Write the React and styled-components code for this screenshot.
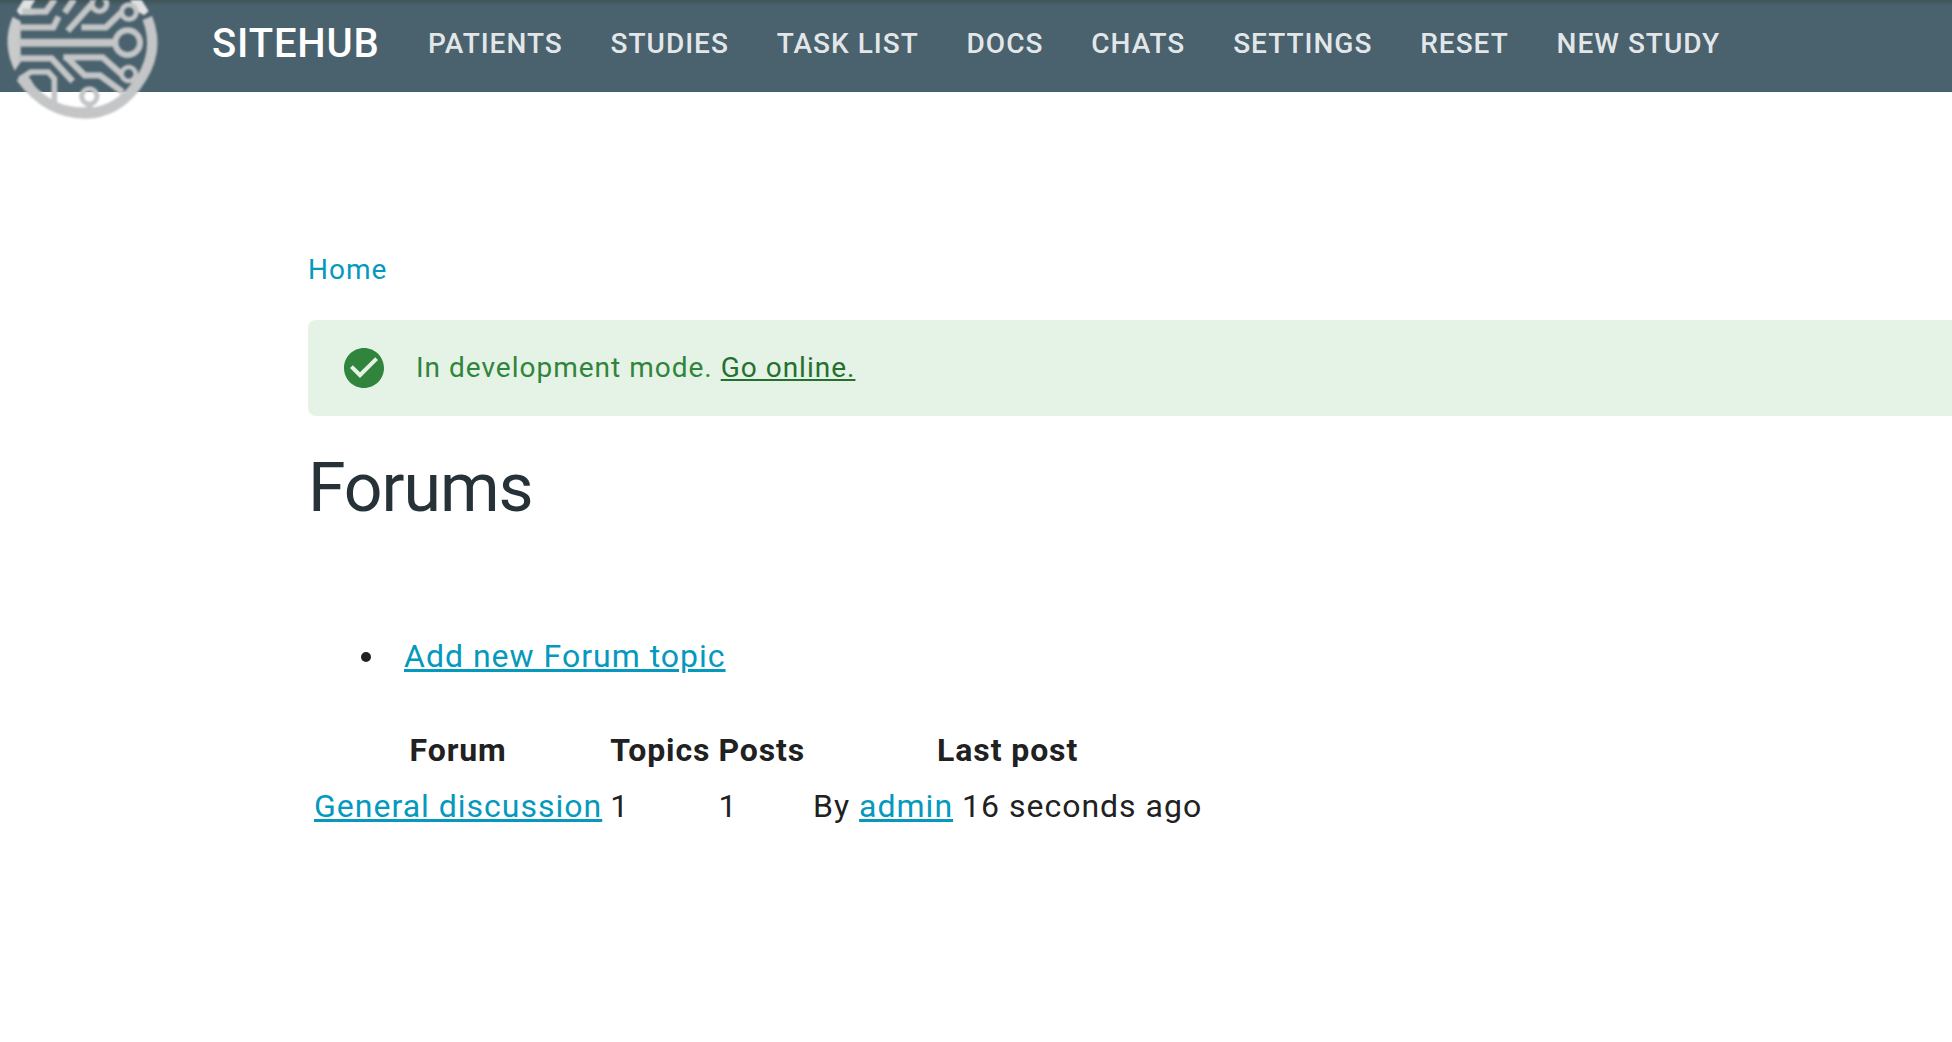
import React from 'react';
import styled, { createGlobalStyle } from 'styled-components';

const GlobalStyle = createGlobalStyle`
  * { box-sizing: border-box; }
  html, body { margin: 0; }
  body {
    background: #fff;
    color: #212121;
    font-family: Roboto, "Liberation Sans", sans-serif;
    font-size: 32px;
    line-height: 48px;
    letter-spacing: 1px;
    overflow: hidden;
  }
`;

const Page = styled.div`
  height: 1042px;
  overflow: hidden;
`;

const TopBar = styled.header`
  display: flex;
  align-items: center;
  height: 92px;
  padding-bottom: 4px;
  background: linear-gradient(#3e5356, #4a626d 6px);
`;

const Logo = styled.svg`
  flex: none;
  align-self: flex-start;
  width: 170px;
  height: 130px;
  filter: blur(0.8px);
`;

const Brand = styled.a`
  margin-left: 42px;
  width: 216px;
  color: #fff;
  font-size: 40px;
  font-weight: 500;
  letter-spacing: 0.85px;
`;

const Nav = styled.nav`
  display: flex;
  gap: 47.85px;
`;

const NavLink = styled.a`
  color: rgba(255, 255, 255, 0.87);
  font-size: 28px;
  font-weight: 500;
  letter-spacing: 1px;
  white-space: nowrap;
`;

const Content = styled.main`
  padding: 158px 0 0 308px;
`;

const Breadcrumb = styled.nav`
  height: 70px;
  line-height: 40px;
  color: #0499bd;
  font-size: 28px;
`;

const Alert = styled.div`
  display: flex;
  align-items: center;
  height: 96px;
  padding-left: 32px;
  border-radius: 8px 0 0 8px;
  background: #e4f3e5;
  color: #31843b;
  font-size: 28px;
`;

const AlertIcon = styled.svg`
  width: 48px;
  height: 48px;
  margin-right: 28px;
`;

const AlertLink = styled.a`
  color: #24702e;
  text-decoration: underline;
`;

const Title = styled.h1`
  margin: 32px 0 0;
  color: #263238;
  font-size: 68px;
  font-weight: 400;
  line-height: 80px;
  letter-spacing: -1.05px;
`;

const Actions = styled.ul`
  margin: 104px 0 0;
  padding: 0 0 0 80px;
`;

const Action = styled.li`
  padding-left: 16px;
`;

const Link = styled.a`
  color: #0499bd;
  text-decoration: underline;
`;

const Table = styled.table`
  margin-top: 40px;
  border-spacing: 4px;

  th, td { padding: 2px; white-space: nowrap; }
  td { text-align: left; }
  th { font-weight: 700; text-align: center; letter-spacing: 0.9px; }
`;

const LINKS = ['PATIENTS', 'STUDIES', 'TASK LIST', 'DOCS', 'CHATS', 'SETTINGS', 'RESET', 'NEW STUDY'];

function CircuitLogo() {
  return (
    <Logo viewBox="0 0 510 390" fill="none" stroke="#c3c5c6" strokeWidth="19" aria-hidden="true">
      <path d="M38 50L62 64V186L44 212Q4 130 38 50Z" fill="#c8cacb" stroke="none" />
      <path d="M442 54Q484 160 408 258Q348 338 256 341Q140 340 62 232" strokeWidth="31" />
      <path d="M190 315L232 322L300 322L345 300L330 330L200 335Z" fill="#c3c5c6" stroke="none" />
      <path d="M50 32L74 -6H110L92 22L104 45H60Z" fill="#e0e2e2" stroke="none" />
      <path d="M446 34L420 -8H385L412 34L432 46Z" fill="#e0e2e2" stroke="none" />
      <path d="M66 35H138L164 -2" />
      <path d="M56 82H160L176 50" />
      <path d="M54 128H344" strokeWidth="24" />
      <circle cx="383" cy="128" r="37" strokeWidth="18" />
      <path d="M194 38L222 -2" />
      <path d="M203 93L274 14" />
      <circle cx="298" cy="12" r="22" strokeWidth="16" />
      <path d="M244 82H318L366 35" />
      <circle cx="387" cy="36" r="22" strokeWidth="15" />
      <path d="M54 175H155L218 244" />
      <path d="M190 172H308L366 224" />
      <path d="M202 175L254 226H300L368 276" />
      <circle cx="386" cy="222" r="21" strokeWidth="14" />
      <path d="M58 238L92 216H145L163 236V328" strokeWidth="17" />
      <path d="M76 218L92 238L120 285L90 270L56 232Z" fill="#c3c5c6" stroke="none" />
      <circle cx="268" cy="289" r="23" strokeWidth="15" />
      <path d="M268 312V338" />
    </Logo>
  );
}

export default function App() {
  return (
    <Page>
      <GlobalStyle />
      <TopBar>
        <CircuitLogo />
        <Brand>SITEHUB</Brand>
        <Nav>
          {LINKS.map((label) => (
            <NavLink key={label}>{label}</NavLink>
          ))}
        </Nav>
      </TopBar>
      <Content>
        <Breadcrumb>Home</Breadcrumb>
        <Alert>
          <AlertIcon viewBox="0 0 24 24" fill="currentColor" aria-hidden="true">
            <path d="M12 2C6.48 2 2 6.48 2 12s4.48 10 10 10 10-4.48 10-10S17.52 2 12 2zm-2 15l-5-5 1.41-1.41L10 14.17l7.59-7.59L19 8l-9 9z" />
          </AlertIcon>
          <span>
            In development mode. <AlertLink>Go online.</AlertLink>
          </span>
        </Alert>
        <Title>Forums</Title>
        <Actions>
          <Action>
            <Link>Add new Forum topic</Link>
          </Action>
        </Actions>
        <Table>
          <thead>
            <tr>
              <th>Forum</th>
              <th>Topics</th>
              <th>Posts</th>
              <th>Last post</th>
            </tr>
          </thead>
          <tbody>
            <tr>
              <td>
                <Link>General discussion</Link>
              </td>
              <td>1</td>
              <td>1</td>
              <td>
                By <Link>admin</Link> 16 seconds ago
              </td>
            </tr>
          </tbody>
        </Table>
      </Content>
    </Page>
  );
}
